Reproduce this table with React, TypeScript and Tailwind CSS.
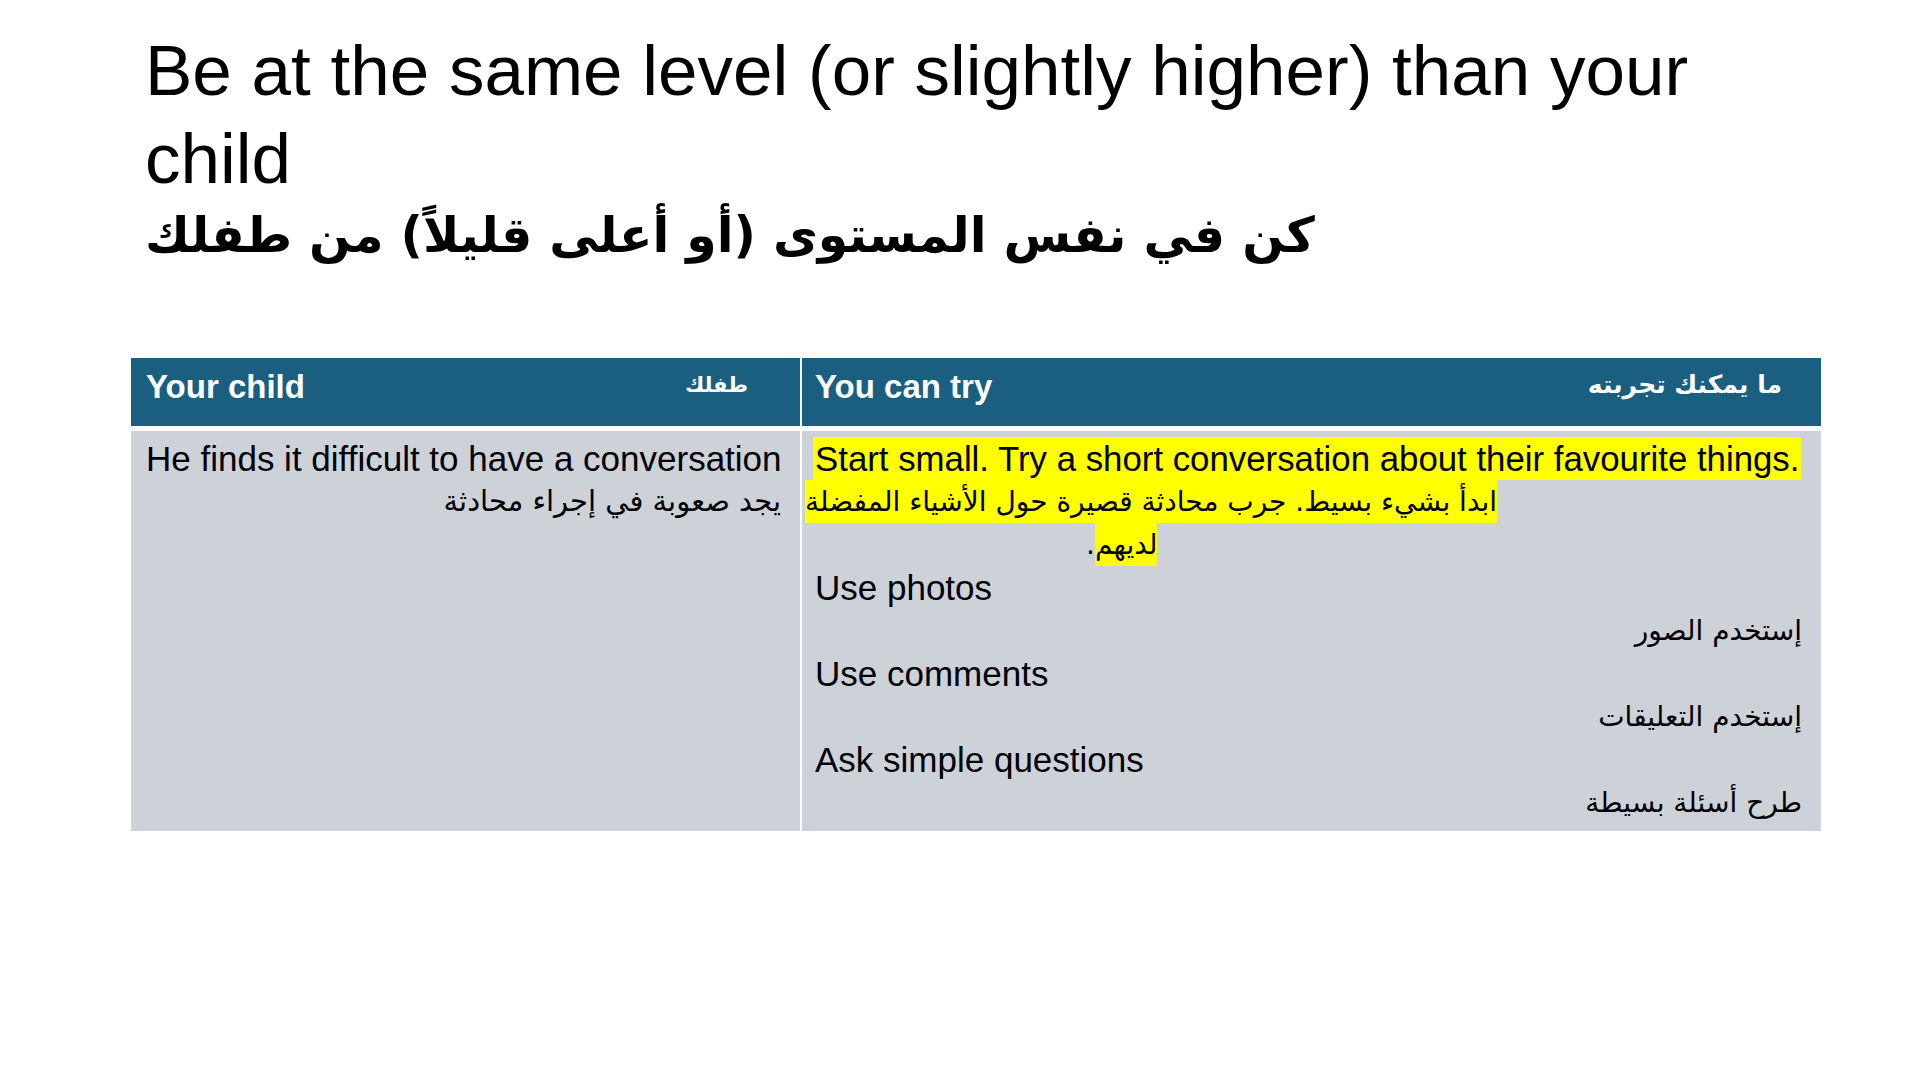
import React from "react";

export default function App() {
  return (
    <div className="w-[1920px] h-[1080px] bg-white overflow-hidden text-black [font-family:'Liberation_Sans',Arial,sans-serif]">
      {/* Title */}
      <div className="h-[358px] pt-[27px] pl-[145px]">
        <h1 className="text-[71px] leading-[88px] font-normal whitespace-nowrap">
          Be at the same level (or slightly higher) than your
          <br />
          child
        </h1>
        <div
          dir="rtl"
          className="inline-block text-[49px] leading-[66px] font-bold [font-family:'DejaVu_Sans',sans-serif]"
        >
          كن في نفس المستوى (أو أعلى قليلاً) من طفلك
        </div>
      </div>

      {/* Table */}
      <div className="ml-[131px] w-[1690px] grid grid-cols-[669px_1019px] gap-x-[2px] gap-y-[5px]">
        {/* Header */}
        <div className="h-[68px] bg-[#1a5e80] pt-[9px] pl-[15px] pr-[52px] flex justify-between items-start text-white">
          <span className="text-[33px] leading-[40px] font-bold">Your child</span>
          <span
            dir="rtl"
            className="text-[21px] leading-[36px] font-bold [font-family:'DejaVu_Sans',sans-serif]"
          >
            طفلك
          </span>
        </div>
        <div className="h-[68px] bg-[#1a5e80] pt-[9px] pl-[13px] pr-[39px] flex justify-between items-start text-white">
          <span className="text-[33px] leading-[40px] font-bold">You can try</span>
          <span
            dir="rtl"
            className="text-[25px] leading-[36px] font-bold [font-family:'DejaVu_Sans',sans-serif]"
          >
            ما يمكنك تجربته
          </span>
        </div>

        {/* Body */}
        <div className="h-[400px] bg-[#cdd1d8] pt-[6px] pl-[15px] pr-[19px]">
          <div className="text-[35px] leading-[43px] whitespace-nowrap">
            He finds it difficult to have a conversation
          </div>
          <div
            dir="rtl"
            className="text-[29px] leading-[43px] [font-family:'DejaVu_Sans',sans-serif]"
          >
            يجد صعوبة في إجراء محادثة
          </div>
        </div>
        <div className="h-[400px] bg-[#cdd1d8] pt-[6px] pr-[19px]">
          <div className="pl-[11px] text-[34.8px] leading-[43px] whitespace-nowrap">
            <span className="inline-block bg-[#ffff00] px-[2px]">
              Start small. Try a short conversation about their favourite things.
            </span>
          </div>
          <div className="pl-[3px] text-[28px] leading-[43px] [font-family:'DejaVu_Sans',sans-serif]">
            <span dir="rtl" className="inline-block bg-[#ffff00] whitespace-nowrap">
              ابدأ بشيء بسيط. جرب محادثة قصيرة حول الأشياء المفضلة
            </span>
          </div>
          <div className="pl-[284px] text-[28px] leading-[43px] [font-family:'DejaVu_Sans',sans-serif]">
            <span dir="rtl" className="inline-block">
              <span className="bg-[#ffff00] inline-block">لديهم</span>.
            </span>
          </div>
          <div className="pl-[13px] text-[35px] leading-[43px]">Use photos</div>
          <div
            dir="rtl"
            className="text-[28px] leading-[43px] [font-family:'DejaVu_Sans',sans-serif]"
          >
            إستخدم الصور
          </div>
          <div className="pl-[13px] text-[35px] leading-[43px]">Use comments</div>
          <div
            dir="rtl"
            className="text-[28px] leading-[43px] [font-family:'DejaVu_Sans',sans-serif]"
          >
            إستخدم التعليقات
          </div>
          <div className="pl-[13px] text-[35px] leading-[43px]">Ask simple questions</div>
          <div
            dir="rtl"
            className="text-[28px] leading-[43px] [font-family:'DejaVu_Sans',sans-serif]"
          >
            طرح أسئلة بسيطة
          </div>
        </div>
      </div>
    </div>
  );
}
